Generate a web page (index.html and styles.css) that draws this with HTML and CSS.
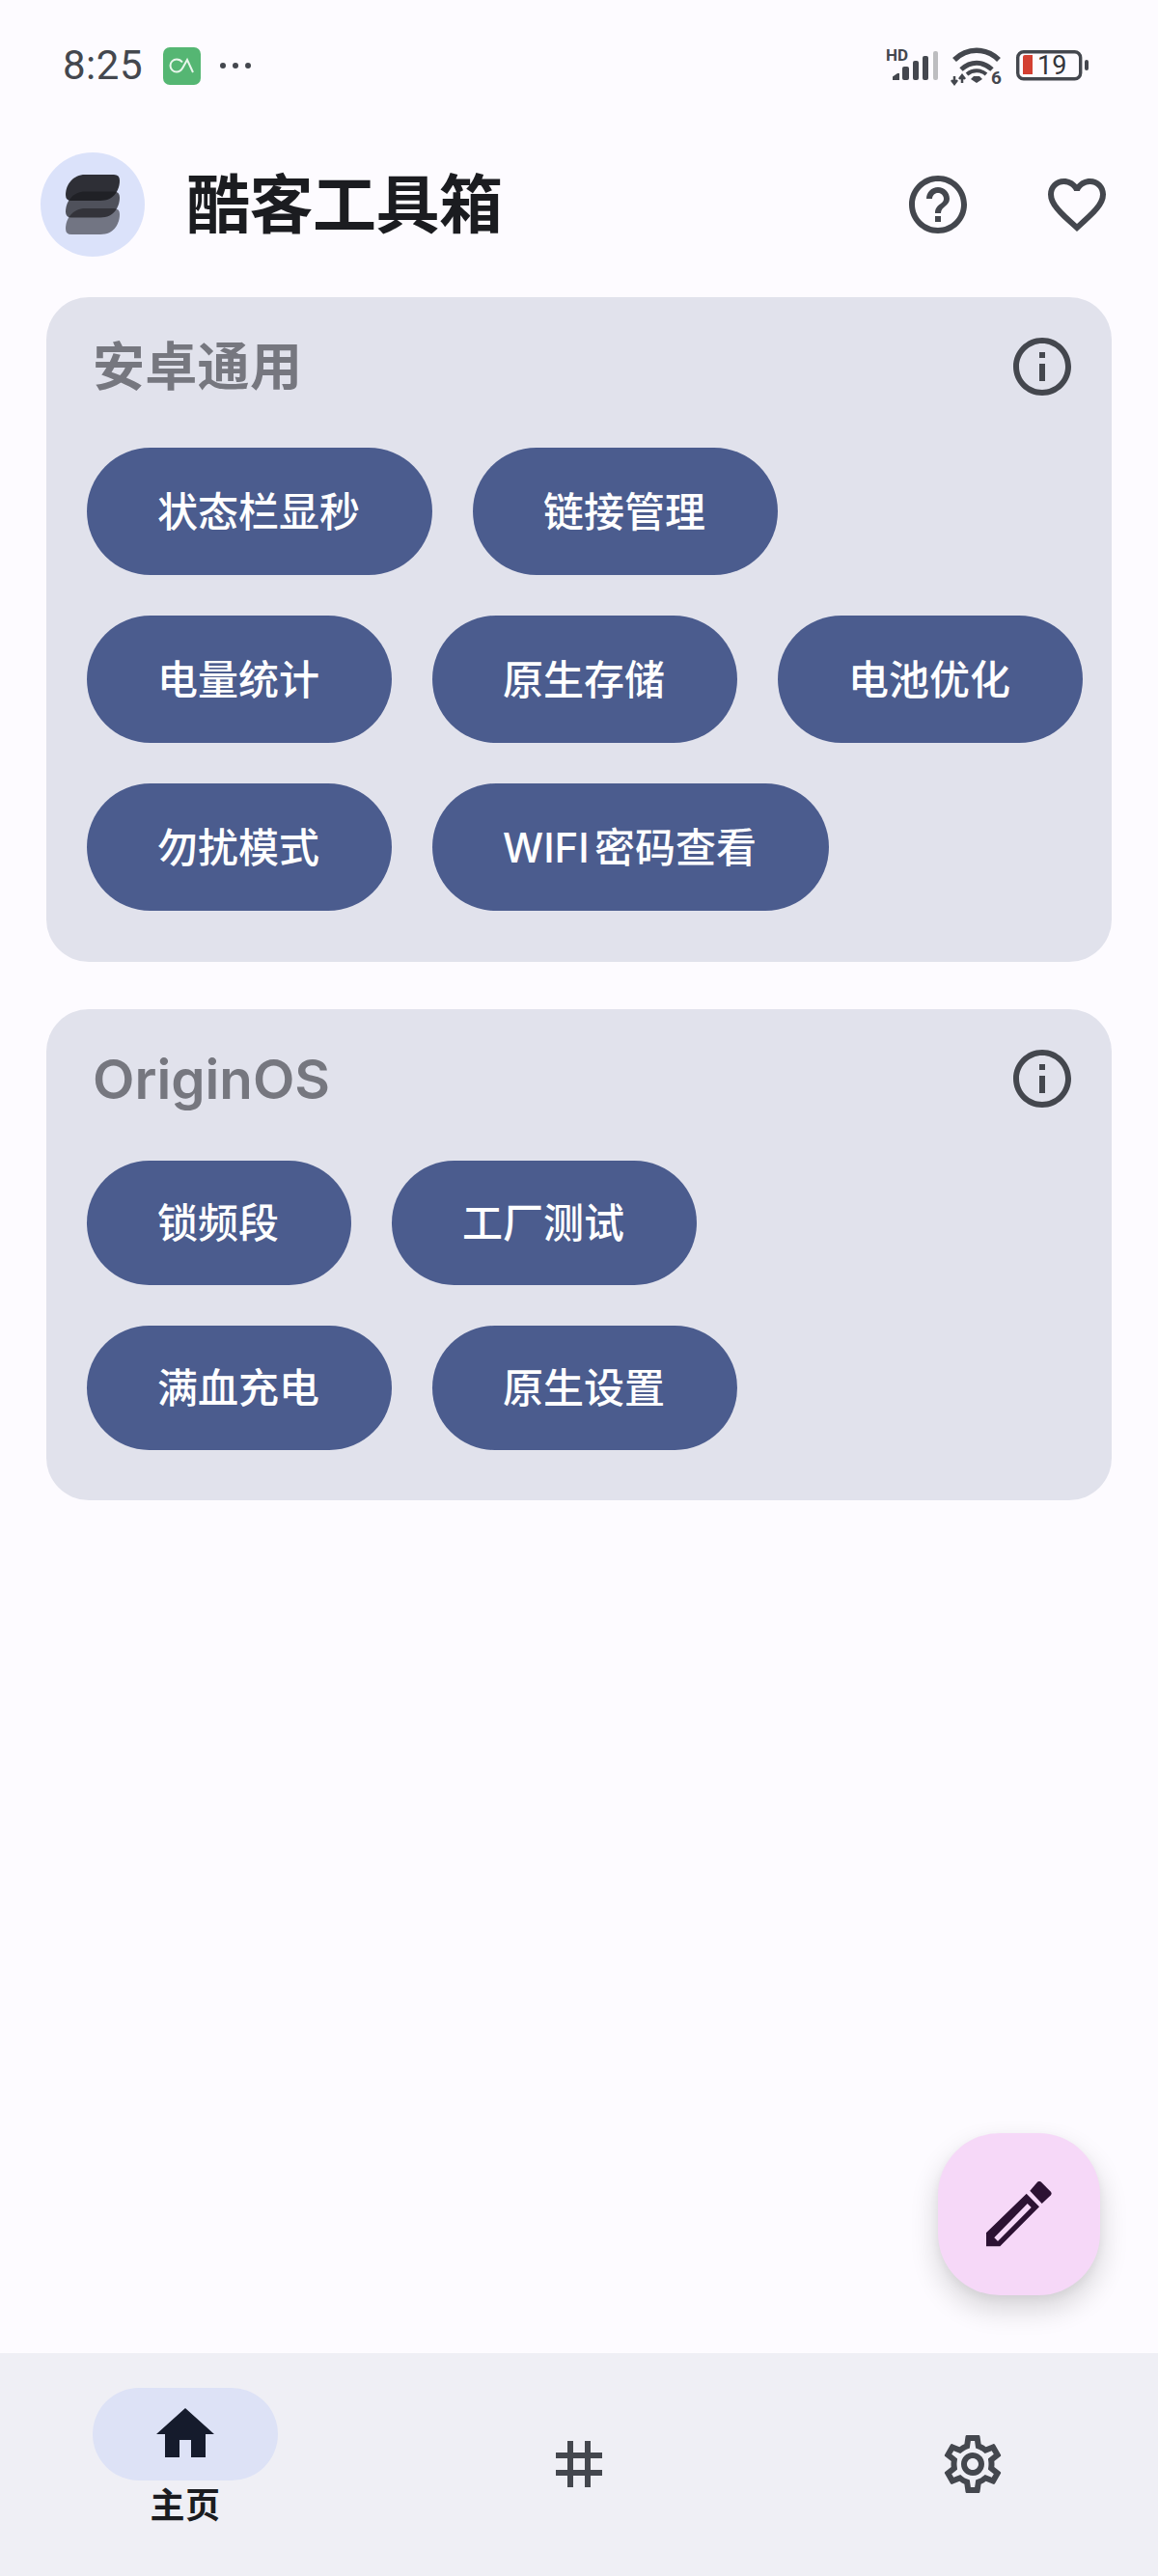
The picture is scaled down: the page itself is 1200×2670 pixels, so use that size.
FILE: index.html
```html
<!DOCTYPE html>
<html lang="zh-CN">
<head>
<meta charset="utf-8">
<title>酷客工具箱</title>
<link rel="stylesheet" href="styles.css">
</head>
<body>
<div class="page">
  <div class="status">
    <div class="status-left">
      <span class="time">8:25</span>
      <svg class="app-badge" width="39" height="39" viewBox="0 0 39 39">
        <rect width="39" height="39" rx="7" fill="#55b673"/>
        <path d="M20 15.500c-1.500-2-3.500-3-6-3a6.500 6.500 0 0 0 0 13c3 0 4.800-1.500 6.500-4.500L25 13l6 13" fill="none" stroke="#e8f6ec" stroke-width="2"/>
      </svg>
      <svg class="dots" width="34" height="8" viewBox="0 0 34 8" fill="#44474e">
        <circle cx="4" cy="4" r="3"/><circle cx="17" cy="4" r="3"/><circle cx="30" cy="4" r="3"/>
      </svg>
    </div>
    <svg class="status-right" width="215" height="60" viewBox="0 0 215 60">
      <text x="3" y="18" class="hd">HD</text>
      <g fill="#44474e">
        <path d="M10 38v-3.500l5-3.500h2v7z"/>
        <rect x="20" y="24" width="7" height="14" rx="2"/>
        <rect x="31" y="18" width="6" height="20" rx="2"/>
        <rect x="41" y="13" width="6" height="25" rx="2"/>
        <rect x="52" y="8" width="5" height="30" rx="2" fill="#bdbdc0"/>
      </g>
      <g fill="none" stroke="#44474e" stroke-width="5.500">
        <path d="M74 17c13-13 33-13 46 0"/>
        <path d="M81 27c10-9 22-9 32 0" stroke-width="5"/>
        <path d="M87 32c6-5 14-5 20 0" stroke-width="4"/>
      </g>
      <path d="M97 41l-6-4 3-3h6l3 3z" fill="#44474e"/>
      <path d="M74 34v8M71 38l3 4 3-4M82 41v-8M79 37l3-4 3 4" fill="none" stroke="#44474e" stroke-width="2.500"/>
      <text x="112" y="42" class="six">6</text>
      <rect x="139.700" y="8.700" width="65" height="28" rx="6" fill="none" stroke="#44474e" stroke-width="3.400"/>
      <path d="M147 12h8v20h-10v-18q0-2 2-2z" fill="#d33f32"/>
      <text x="160" y="32" class="batt">19</text>
      <rect x="209" y="17" width="4" height="11" rx="2" fill="#44474e"/>
    </svg>
  </div>

  <header class="appbar">
    <div class="avatar">
      <svg width="56" height="62" viewBox="0 0 56 62" fill="#1b1c20">
        <path opacity=".55" transform="translate(0 35)" d="M20 0H50Q56 0 56 6C56 16 50 27 36 27H6Q0 27 0 21C0 10 8 0 20 0Z"/>
        <path opacity=".73" transform="translate(0 17.500)" d="M20 0H50Q56 0 56 6C56 16 50 27 36 27H6Q0 27 0 21C0 10 8 0 20 0Z"/>
        <path opacity=".9" d="M20 0H50Q56 0 56 6C56 16 50 27 36 27H6Q0 27 0 21C0 10 8 0 20 0Z"/>
      </svg>
    </div>
    <h1 class="title">酷客工具箱</h1>
    <svg class="bar-icon help" width="72" height="72" viewBox="0 0 24 24"><path d="M11 18h2v-2h-2v2zm1-16C6.480 2 2 6.480 2 12s4.480 10 10 10 10-4.480 10-10S17.520 2 12 2zm0 18c-4.410 0-8-3.590-8-8s3.590-8 8-8 8 3.590 8 8-3.590 8-8 8zm0-14c-2.210 0-4 1.790-4 4h2c0-1.100.9-2 2-2s2 .9 2 2c0 2-3 1.750-3 5h2c0-2.250 3-2.500 3-5 0-2.210-1.790-4-4-4z"/></svg>
    <svg class="bar-icon heart" width="72" height="72" viewBox="0 0 24 24"><path d="M16.500 3c-1.740 0-3.410.81-4.500 2.090C10.910 3.810 9.240 3 7.500 3 4.420 3 2 5.420 2 8.500c0 3.780 3.400 6.860 8.550 11.540L12 21.350l1.450-1.320C18.600 15.360 22 12.280 22 8.500 22 5.420 19.580 3 16.500 3zm-4.400 15.550l-.1.1-.1-.1C7.140 14.240 4 11.390 4 8.500 4 6.500 5.500 5 7.500 5c1.540 0 3.040.99 3.570 2.360h1.870C13.460 5.990 14.960 5 16.500 5c2 0 3.500 1.500 3.500 3.500 0 2.890-3.140 5.740-7.900 10.050z"/></svg>
  </header>

  <main class="content">
    <section class="card card-a">
      <div class="card-head">
        <h2 class="card-title">安卓通用</h2>
        <svg class="bar-icon" width="72" height="72" viewBox="0 0 24 24"><path d="M11 7h2v2h-2zm0 4h2v6h-2zm1-9C6.480 2 2 6.480 2 12s4.480 10 10 10 10-4.480 10-10S17.520 2 12 2zm0 18c-4.410 0-8-3.590-8-8s3.590-8 8-8 8 3.590 8 8-3.590 8-8 8z"/></svg>
      </div>
      <div class="rows">
        <div class="row"><span class="pill">状态栏显秒</span><span class="pill">链接管理</span></div>
        <div class="row"><span class="pill">电量统计</span><span class="pill">原生存储</span><span class="pill">电池优化</span></div>
        <div class="row"><span class="pill">勿扰模式</span><span class="pill">WIFI 密码查看</span></div>
      </div>
    </section>
    <section class="card card-b">
      <div class="card-head">
        <h2 class="card-title card-title-latin">OriginOS</h2>
        <svg class="bar-icon" width="72" height="72" viewBox="0 0 24 24"><path d="M11 7h2v2h-2zm0 4h2v6h-2zm1-9C6.480 2 2 6.480 2 12s4.480 10 10 10 10-4.480 10-10S17.520 2 12 2zm0 18c-4.410 0-8-3.590-8-8s3.590-8 8-8 8 3.590 8 8-3.590 8-8 8z"/></svg>
      </div>
      <div class="rows">
        <div class="row"><span class="pill">锁频段</span><span class="pill">工厂测试</span></div>
        <div class="row"><span class="pill">满血充电</span><span class="pill">原生设置</span></div>
      </div>
    </section>
  </main>

  <button class="fab" type="button" aria-label="编辑">
    <svg width="68" height="68" viewBox="0 0 68 68" fill="#2c1233">
      <path d="M53 .8a3 3 0 0 1 4 0L66.700 10.500a3 3 0 0 1 0 4L57.700 23 45.300 9.700z"/>
      <path fill-rule="evenodd" d="M41.700 12.700 55 26.300 14.300 67.300H0V53.300zM42.700 23 8.300 58.300 12 62 46.700 27z"/>
    </svg>
  </button>

  <nav class="nav">
    <div class="nav-item">
      <span class="indicator">
        <svg width="72" height="72" viewBox="0 0 24 24" fill="#151b2c"><path d="M10 20v-6h4v6h5v-8h3L12 3 2 12h3v8z"/></svg>
      </span>
      <span class="nav-label">主页</span>
    </div>
    <div class="nav-item">
      <span class="indicator plain">
        <svg class="bar-icon" width="72" height="72" viewBox="0 0 24 24"><path d="M20 10V8h-4V4h-2v4h-4V4H8v4H4v2h4v4H4v2h4v4h2v-4h4v4h2v-4h4v-2h-4v-4h4zm-6 4h-4v-4h4v4z"/></svg>
      </span>
    </div>
    <div class="nav-item">
      <span class="indicator plain">
        <svg class="bar-icon" width="72" height="72" viewBox="0 0 24 24"><path d="M19.430 12.980c.04-.32.07-.64.07-.98 0-.34-.03-.66-.07-.98l2.110-1.650c.19-.15.24-.42.12-.64l-2-3.460c-.09-.16-.26-.25-.44-.25-.06 0-.12.01-.17.03l-2.490 1c-.52-.4-1.080-.73-1.690-.98l-.38-2.650C14.460 2.180 14.250 2 14 2h-4c-.25 0-.46.18-.49.42l-.38 2.650c-.61.25-1.170.59-1.690.98l-2.490-1c-.06-.02-.12-.03-.18-.03-.17 0-.34.09-.43.25l-2 3.460c-.13.22-.07.49.12.64l2.110 1.650c-.04.32-.07.65-.07.98 0 .33.03.66.07.98l-2.110 1.650c-.19.15-.24.42-.12.64l2 3.460c.09.16.26.25.44.25.06 0 .12-.01.17-.03l2.490-1c.52.4 1.080.73 1.690.98l.38 2.650c.03.24.24.42.49.42h4c.25 0 .46-.18.49-.42l.38-2.650c.61-.25 1.170-.59 1.690-.98l2.490 1c.06.02.12.03.18.03.17 0 .34-.09.43-.25l2-3.460c.12-.22.07-.49-.12-.64l-2.110-1.650zm-1.980-1.710c.04.31.05.52.05.73 0 .21-.02.43-.05.73l-.14 1.130.89.7 1.080.84-.7 1.210-1.270-.51-1.040-.42-.9.68c-.43.32-.84.56-1.250.73l-1.060.43-.16 1.130-.2 1.350h-1.400l-.19-1.350-.16-1.130-1.060-.43c-.43-.18-.83-.41-1.230-.71l-.91-.7-1.060.43-1.270.51-.7-1.210 1.080-.84.89-.7-.14-1.130c-.03-.31-.05-.54-.05-.74s.02-.43.05-.73l.14-1.130-.89-.7-1.080-.84.7-1.210 1.270.51 1.040.42.9-.68c.43-.32.84-.56 1.250-.73l1.060-.43.16-1.130.2-1.350h1.390l.19 1.350.16 1.130 1.060.43c.43.18.83.41 1.230.71l.91.7 1.060-.43 1.270-.51.7 1.210-1.070.85-.89.7.14 1.130zM12 8c-2.210 0-4 1.790-4 4s1.790 4 4 4 4-1.790 4-4-1.790-4-4-4zm0 6c-1.100 0-2-.9-2-2s.9-2 2-2 2 .9 2 2-.9 2-2 2z"/></svg>
      </span>
    </div>
  </nav>
</div>
</body>
</html>
```
FILE: styles.css
```css
* { box-sizing: border-box; }
html, body { margin: 0; padding: 0; }
body {
  background: #fdfbff;
  font-family: "Inter", "Noto Sans CJK SC", "Noto Sans", sans-serif;
  color: #1b1c20;
}
.page {
  position: relative;
  width: 1200px;
  height: 2670px;
  display: flex;
  flex-direction: column;
  overflow: hidden;
}
.status {
  height: 158px;
  padding: 45px 70px 0 65px;
  display: flex;
  justify-content: space-between;
  align-items: flex-start;
}
.status-left { display: flex; align-items: center; height: 45px; }
.time {
  font-family: "Roboto", sans-serif;
  font-size: 42px;
  line-height: 45px;
  color: #44474e;
  letter-spacing: .5px;
}
.app-badge { margin: 2px 0 0 21px; }
.dots { margin-left: 19px; }
.hd { font: 700 17px "Roboto", sans-serif; fill: #44474e; }
.six { font: 700 19px "Roboto", sans-serif; fill: #44474e; }
.batt { font: 400 27px "Roboto", sans-serif; fill: #33353a; }
.appbar {
  height: 108px;
  padding: 0 48px 0 42px;
  display: flex;
  align-items: center;
  flex: none;
}
.avatar {
  width: 108px;
  height: 108px;
  border-radius: 50%;
  background: #dbe2fa;
  display: flex;
  align-items: center;
  justify-content: center;
}
.title {
  margin: 0 0 0 43px;
  flex: 1;
  font-size: 66px;
  line-height: 72px;
  font-weight: 700;
  letter-spacing: -.5px;
  color: #1b1c20;
}
.bar-icon { fill: #44474e; flex: none; display: block; }
.help { margin-right: 72px; }
.content {
  flex: 1;
  padding: 42px 48px 0;
  display: flex;
  flex-direction: column;
  gap: 49px;
}
.card {
  background: #e1e2ec;
  border-radius: 44px;
}
.card-a { height: 689px; }
.card-b { height: 509px; }
.card-head {
  display: flex;
  justify-content: space-between;
  align-items: center;
  padding: 36px 36px 0 48px;
  height: 108px;
}
.card-title {
  margin: 0;
  padding-top: 2px;
  font-size: 54px;
  line-height: 70px;
  font-weight: 700;
  letter-spacing: .3px;
  color: #76777f;
}
.card-title-latin {
  font-size: 56.500px;
  font-weight: 600;
  letter-spacing: 0;
}
.rows {
  display: flex;
  flex-direction: column;
  gap: 42px;
  padding: 48px 0 0 42px;
}
.row { display: flex; gap: 42px; }
.pill {
  height: 132px;
  padding: 0 75px 6px 73px;
  border-radius: 66px;
  background: #4b5c8e;
  color: #fff;
  font-size: 42px;
  font-weight: 500;
  word-spacing: -6px;
  display: flex;
  align-items: center;
  white-space: pre;
}
.card-b .rows { padding-top: 49px; }
.card-b .pill { height: 129px; border-radius: 65px; }
.fab {
  position: absolute;
  left: 972px;
  top: 2211px;
  width: 168px;
  height: 168px;
  padding: 0;
  border: 0;
  border-radius: 64px;
  background: #f6d8f8;
  box-shadow: 0 14px 28px 2px rgba(0, 0, 0, .14), 0 4px 10px rgba(0, 0, 0, .05);
  display: flex;
  align-items: center;
  justify-content: center;
}
.nav {
  height: 231px;
  flex: none;
  background: #efeff5;
  display: flex;
  justify-content: space-between;
  padding: 36px 96px 0;
}
.nav-item {
  width: 192px;
  display: flex;
  flex-direction: column;
  align-items: center;
}
.indicator {
  width: 192px;
  height: 96px;
  border-radius: 48px;
  background: #dde2f6;
  display: flex;
  align-items: center;
  justify-content: center;
}
.plain { background: none; margin-top: 31px; }
.nav-label {
  margin-top: 4px;
  font-size: 36px;
  line-height: 44px;
  font-weight: 700;
  letter-spacing: .5px;
  color: #1b1c20;
}
```
